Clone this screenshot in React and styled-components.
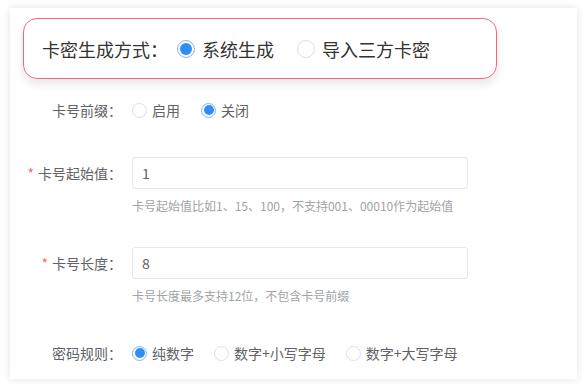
import React from "react";
import styled, { createGlobalStyle } from "styled-components";

const Global = createGlobalStyle`
  html, body { margin: 0; padding: 0; background: #ffffff; }
  body { font-family: "Noto Sans CJK SC", "Noto Sans", sans-serif; }
`;

const Page = styled.div`
  padding: 8px 10px;
  width: 587px;
  height: 387px;
  box-sizing: border-box;
`;

const Card = styled.div`
  width: 567px;
  height: 371px;
  box-sizing: border-box;
  background: #fff;
  box-shadow: 0 0 8px rgba(0, 0, 0, 0.12);
  padding-top: 10px;
`;

const ModeBox = styled.div`
  margin-left: 13px;
  width: 474px;
  height: 61px;
  box-sizing: border-box;
  border: 1.5px solid #f4677b;
  border-radius: 14px;
  box-shadow: 0 5px 10px rgba(0, 0, 0, 0.1);
  display: flex;
  align-items: center;
  padding-left: 18px;
  gap: 9px;
`;

const ModeTitle = styled.span`
  font-size: 18px;
  color: #333;
  line-height: 24px;
`;

const RadioGroup = styled.div`
  display: flex;
  align-items: center;
  gap: ${(p) => p.$gap}px;
`;

const RadioItem = styled.label`
  display: flex;
  align-items: center;
  gap: ${(p) => (p.$big ? 7 : 5)}px;
  font-size: ${(p) => (p.$big ? 18 : 14)}px;
  color: ${(p) => (p.$big ? "#333" : "#606266")};
  line-height: ${(p) => (p.$big ? 24 : 20)}px;
`;

const Dot = styled.span`
  position: relative;
  width: ${(p) => p.$size}px;
  height: ${(p) => p.$size}px;
  box-sizing: border-box;
  border-radius: 50%;
  border: 1px solid ${(p) => (p.$on ? "#7db8f7" : "#dcdfe6")};
  background: #fff;
  flex-shrink: 0;
  &::after {
    content: "";
    display: ${(p) => (p.$on ? "block" : "none")};
    position: absolute;
    inset: ${(p) => (p.$size > 16 ? 2 : 1.5)}px;
    border-radius: 50%;
    background: #2f8df4;
  }
`;

const Row = styled.div`
  display: grid;
  grid-template-columns: 112px 336px;
  column-gap: 10px;
  align-items: center;
  margin-top: ${(p) => p.$top}px;
`;

const Label = styled.div`
  text-align: right;
  font-size: 14px;
  color: #606266;
  line-height: 20px;
  white-space: nowrap;
`;

const Star = styled.span`
  color: #f56c6c;
  margin-right: 4px;
`;

const Input = styled.div`
  height: 32px;
  box-sizing: border-box;
  border: 1px solid #e4e7ed;
  border-radius: 3px;
  padding-left: 9px;
  display: flex;
  align-items: center;
  font-size: 14px;
  color: #606266;
`;

const Hint = styled.div`
  grid-column: 2;
  font-size: 12px;
  line-height: 18px;
  color: #a0a3a8;
  margin-top: 8px;
  white-space: nowrap;
`;

const Radio = ({ on, big, children }) => (
  <RadioItem $big={big}>
    <Dot $on={on} $size={big ? 18 : 15} />
    <span>{children}</span>
  </RadioItem>
);

export default function App() {
  return (
    <>
      <Global />
      <Page>
        <Card>
          <ModeBox>
            <ModeTitle>卡密生成方式：</ModeTitle>
            <RadioGroup $gap={23}>
              <Radio big on>系统生成</Radio>
              <Radio big>导入三方卡密</Radio>
            </RadioGroup>
          </ModeBox>

          <Row $top={21}>
            <Label>卡号前缀：</Label>
            <RadioGroup $gap={21}>
              <Radio>启用</Radio>
              <Radio on>关闭</Radio>
            </RadioGroup>
          </Row>

          <Row $top={37}>
            <Label>
              <Star>*</Star>卡号起始值：
            </Label>
            <Input>1</Input>
            <Hint>卡号起始值比如1、15、100，不支持001、00010作为起始值</Hint>
          </Row>

          <Row $top={32}>
            <Label>
              <Star>*</Star>卡号长度：
            </Label>
            <Input>8</Input>
            <Hint>卡号长度最多支持12位，不包含卡号前缀</Hint>
          </Row>

          <Row $top={38}>
            <Label>密码规则：</Label>
            <RadioGroup $gap={20}>
              <Radio on>纯数字</Radio>
              <Radio>数字+小写字母</Radio>
              <Radio>数字+大写字母</Radio>
            </RadioGroup>
          </Row>
        </Card>
      </Page>
    </>
  );
}
